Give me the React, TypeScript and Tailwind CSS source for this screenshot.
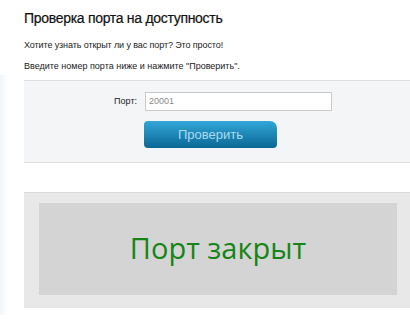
export default function App() {
  return (
    <div className="w-[410px] h-[320px] bg-white overflow-hidden relative" style={{ fontFamily: '"Liberation Sans", Arial, sans-serif' }}>
      <div className="absolute left-0 top-[75px] w-[8px] h-[240px] bg-gradient-to-r from-[#eef6fa] to-white" />
      <div className="pl-[24px] pt-[10px]">
        <h1 className="text-[14px] leading-[17px] text-[#111] tracking-[-0.3px] [-webkit-text-stroke:0.2px_#111]">Проверка порта на доступность</h1>
        <p className="mt-[13px] text-[9px] leading-[11px] text-[#222] tracking-[-0.1px]">Хотите узнать открыт ли у вас порт? Это просто!</p>
        <p className="mt-[10px] text-[9px] leading-[11px] text-[#222]">Введите номер порта ниже и нажмите "Проверить".</p>
        <div className="mt-[8px] h-[83px] bg-[#f3f5f6] border-t border-b border-[#dddfe0] flex flex-col items-start">
          <div className="flex items-center mt-[11px]">
            <span className="w-[121px] text-right text-[9px] text-[#222] pr-[8px]">Порт:</span>
            <div className="w-[187px] h-[19px] bg-white border border-[#c9c9c9] flex items-center pl-[3px] text-[9px] text-[#8a8a8a]">20001</div>
          </div>
          <button className="ml-[120px] mt-[10px] w-[133px] h-[27px] rounded-[4px] rounded-tr-[7px] bg-gradient-to-b from-[#31a7d8] to-[#0a6895] text-[13px] text-[#a9dcf1] flex items-center justify-center">Проверить</button>
        </div>
        <div className="mt-[29px] h-[116px] bg-[#e8e8e8] border-t border-[#dadada] pt-[10px] pl-[15px] pr-[13px]">
          <div className="h-[92px] bg-[#d4d4d4] flex items-center justify-center">
            <span className="text-[29px] text-[#168516] pb-[2px]" style={{ fontFamily: '"Open Sans", sans-serif' }}>Порт закрыт</span>
          </div>
        </div>
      </div>
    </div>
  );
}
